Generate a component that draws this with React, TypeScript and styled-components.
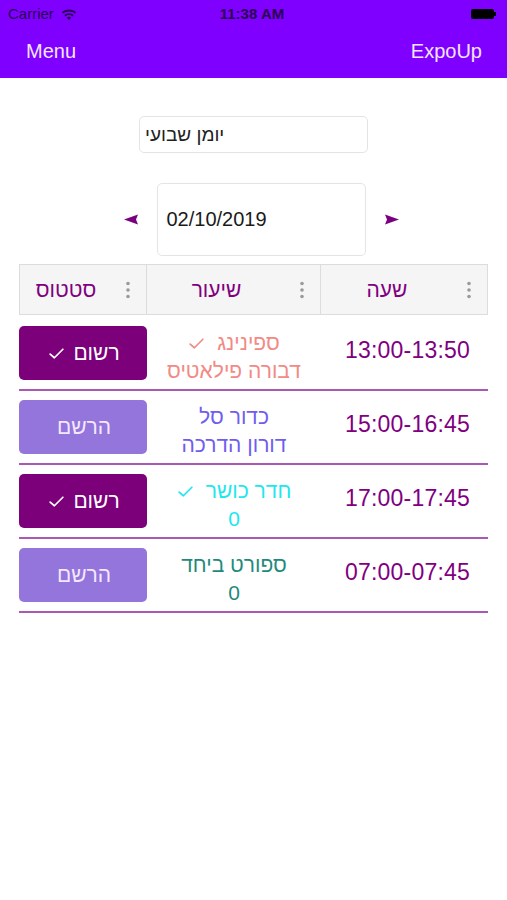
import React from 'react';
import styled, { createGlobalStyle } from 'styled-components';

type Lesson = {
    time: string;
    name: string;
    sub: string;
    color: string;
    checked: boolean;
    registered: boolean;
};

const lessons: Lesson[] = [
    { time: '13:00-13:50', name: 'ספינינג', sub: 'דבורה פילאטיס', color: '#f28a86', checked: true, registered: true },
    { time: '15:00-16:45', name: 'כדור סל', sub: 'דורון הדרכה', color: '#6f5df0', checked: false, registered: false },
    { time: '17:00-17:45', name: 'חדר כושר', sub: '0', color: '#22e6ef', checked: true, registered: true },
    { time: '07:00-07:45', name: 'ספורט ביחד', sub: '0', color: '#1f8a7c', checked: false, registered: false },
];

const GlobalStyle = createGlobalStyle`
    body {
        margin: 0;
        background: #ffffff;
        font-family: "Liberation Sans", "DejaVu Sans", sans-serif;
    }
`;

const CheckIcon: React.FC<{ size?: number }> = ({ size = 16 }) => (
    <svg width={size} height={size} viewBox="0 0 16 16" fill="none" stroke="currentColor" strokeWidth={1.6} strokeLinecap="round" strokeLinejoin="round">
        <polyline points="2,8.5 6,12 14,4" />
    </svg>
);

const WifiIcon = () => (
    <svg width="16" height="12" viewBox="0 0 16 12" fill="#2a0052">
        <path d="M8 1.5C5.2 1.5 2.7 2.5 0.8 4.2L2.1 5.6C3.7 4.2 5.8 3.4 8 3.4s4.3 0.8 5.9 2.2l1.3-1.4C13.3 2.5 10.8 1.5 8 1.5z" />
        <path d="M8 5.2c-1.8 0-3.5 0.7-4.7 1.8l1.3 1.4C5.5 7.6 6.7 7.1 8 7.1s2.5 0.5 3.4 1.3l1.3-1.4C11.5 5.9 9.8 5.2 8 5.2z" />
        <path d="M8 8.8c-0.9 0-1.7 0.3-2.3 0.9L8 12l2.3-2.3C9.7 9.1 8.9 8.8 8 8.8z" />
    </svg>
);

const Kebab = () => (
    <svg width="4" height="18" viewBox="0 0 4 18" fill="#9a9a9a">
        <circle cx="2" cy="2.5" r="1.8" />
        <circle cx="2" cy="9" r="1.8" />
        <circle cx="2" cy="15.5" r="1.8" />
    </svg>
);

const Triangle: React.FC<{ dir: 'left' | 'right' }> = ({ dir }) => (
    <svg width="14" height="11" viewBox="0 0 14 11" fill="#7a0080">
        {dir === 'left'
            ? <polygon points="0,5.5 14,0.5 12,5.5 14,10.5" />
            : <polygon points="14,5.5 0,0.5 2,5.5 0,10.5" />}
    </svg>
);

export default function App() {
    return (
        <Page>
            <GlobalStyle />
            <TopBar>
                <StatusBar>
                    <Carrier>Carrier <WifiIcon /></Carrier>
                    <Clock>11:38 AM</Clock>
                    <Battery />
                </StatusBar>
                <NavBar>
                    <NavText>Menu</NavText>
                    <NavText>ExpoUp</NavText>
                </NavBar>
            </TopBar>

            <Picker>יומן שבועי</Picker>

            <DateRow>
                <Triangle dir="left" />
                <DateBox>02/10/2019</DateBox>
                <Triangle dir="right" />
            </DateRow>

            <Table>
                <HeaderRow>
                    <HeaderCell><span>סטטוס</span><Kebab /></HeaderCell>
                    <HeaderCell><span>שיעור</span><Kebab /></HeaderCell>
                    <HeaderCell><span>שעה</span><Kebab /></HeaderCell>
                </HeaderRow>
                {lessons.map((lesson, index) => (
                    <BodyRow key={index}>
                        <StatusButton $registered={lesson.registered}>
                            {lesson.registered ? 'רשום' : 'הרשם'}
                            {lesson.registered && <CheckIcon size={17} />}
                        </StatusButton>
                        <LessonCell $color={lesson.color}>
                            <LessonLine>
                                {lesson.name}
                                {lesson.checked && <CheckIcon size={17} />}
                            </LessonLine>
                            <LessonLine>{lesson.sub}</LessonLine>
                        </LessonCell>
                        <TimeCell>{lesson.time}</TimeCell>
                    </BodyRow>
                ))}
            </Table>
        </Page>
    );
}

const Page = styled.div`
    width: 507px;
    min-height: 900px;
    display: flex;
    flex-direction: column;
    align-items: center;
`;

const TopBar = styled.div`
    align-self: stretch;
    background: #8000ff;
`;

const StatusBar = styled.div`
    height: 27px;
    display: flex;
    align-items: center;
    justify-content: space-between;
    padding: 0 11px 0 8px;
    color: #2a0052;
    font-size: 15px;
`;

const Carrier = styled.div`
    display: flex;
    align-items: center;
    gap: 7px;
    width: 90px;
`;

const Clock = styled.div`
    font-weight: bold;
    font-size: 15px;
`;

const Battery = styled.div`
    width: 90px;
    display: flex;
    justify-content: flex-end;
    &::before {
        content: '';
        width: 23px;
        height: 10px;
        border-radius: 2px;
        background: #000;
    }
    &::after {
        content: '';
        width: 2px;
        height: 4px;
        margin-top: 3px;
        background: #000;
    }
`;

const NavBar = styled.div`
    height: 51px;
    display: flex;
    align-items: center;
    justify-content: space-between;
    padding: 0 25px 0 26px;
`;

const NavText = styled.div`
    color: #f4e6ff;
    font-size: 20px;
    padding-bottom: 2px;
`;

const Picker = styled.div`
    margin-top: 38px;
    width: 217px;
    height: 35px;
    padding: 0 5px;
    border: 1px solid #e4e4e4;
    border-radius: 5px;
    display: flex;
    align-items: center;
    direction: ltr;
    font-size: 19px;
    color: #222;
`;

const DateRow = styled.div`
    margin-top: 30px;
    margin-left: 15px;
    display: flex;
    align-items: center;
    gap: 19px;
`;

const DateBox = styled.div`
    width: 198px;
    height: 71px;
    padding-left: 9px;
    border: 1px solid #e4e4e4;
    border-radius: 5px;
    display: flex;
    align-items: center;
    font-size: 20px;
    color: #1a1a1a;
`;

const Table = styled.div`
    margin-top: 8px;
    width: 469px;
    display: flex;
    flex-direction: column;
`;

const HeaderRow = styled.div`
    display: grid;
    grid-template-columns: 128px 174px 167px;
    height: 51px;
    margin-bottom: 2px;
`;

const HeaderCell = styled.div`
    background: #f5f5f5;
    border: 1px solid #dcdcdc;
    border-left-width: 0;
    &:first-child {
        border-left-width: 1px;
    }
    display: flex;
    align-items: center;
    justify-content: space-between;
    padding: 0 16px 0 0;
    color: #800080;
    font-size: 21px;
    span {
        flex: 1;
        text-align: center;
        padding-right: 14px;
    }
`;

const BodyRow = styled.div`
    display: grid;
    grid-template-columns: 128px 174px 167px;
    align-items: center;
    height: 72px;
    border-bottom: 2px solid #a958b4;
`;

const StatusButton = styled.div<{ $registered: boolean }>`
    height: 54px;
    border-radius: 5px;
    background: ${({ $registered }) => ($registered ? '#7b0079' : '#9475dc')};
    color: ${({ $registered }) => ($registered ? '#ffffff' : '#f3e8ff')};
    direction: rtl;
    display: flex;
    align-items: center;
    justify-content: center;
    gap: 8px;
    font-size: 21px;
    padding-left: 2px;
`;

const LessonCell = styled.div<{ $color: string }>`
    color: ${({ $color }) => $color};
    display: flex;
    flex-direction: column;
    align-items: center;
    font-size: 21px;
    line-height: 28px;
    padding-top: 8px;
`;

const LessonLine = styled.div`
    direction: rtl;
    display: flex;
    align-items: center;
    gap: 12px;
`;

const TimeCell = styled.div`
    color: #800080;
    font-size: 23px;
    letter-spacing: 0.2px;
    text-align: center;
    padding-bottom: 6px;
    padding-left: 6px;
`;
